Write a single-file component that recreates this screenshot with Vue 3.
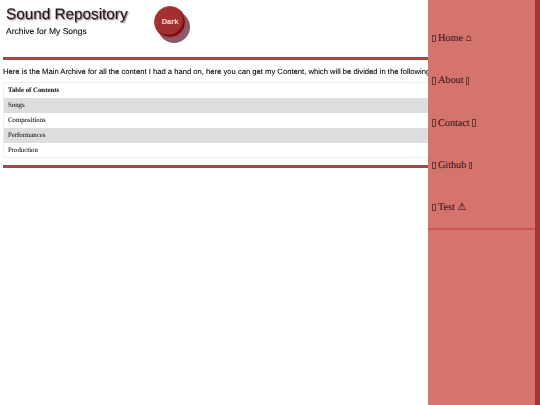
<script setup>
const contents = ['Songs', 'Compositions', 'Performances', 'Production']
const links = [
  { label: 'Home', after: '⌂' },
  { label: 'About', after: '' },
  { label: 'Contact', after: '' },
  { label: 'Github', after: '' },
  { label: 'Test', after: '⚠' }
]
</script>

<template>
  <div class="page">
    <main class="main">
      <header class="header">
        <div class="brand">
          <h1 class="title">Sound Repository</h1>
          <p class="subtitle">Archive for My Songs</p>
        </div>
        <button class="dark-btn">Dark</button>
      </header>
      <hr class="rule" />
      <p class="intro">Here is the Main Archive for all the content I had a hand on, here you can get my Content, which will be divided in the following sections</p>
      <table class="toc">
        <thead>
          <tr><th>Table of Contents</th></tr>
        </thead>
        <tbody>
          <tr v-for="item in contents" :key="item"><td>{{ item }}</td></tr>
        </tbody>
      </table>
      <hr class="rule rule-bottom" />
    </main>
    <nav class="side">
      <ul class="menu">
        <li v-for="l in links" :key="l.label" class="menu-item">
          <span class="tofu"></span>
          <span>{{ l.label }}</span>
          <span v-if="l.after">{{ l.after }}</span>
          <span v-else class="tofu"></span>
        </li>
      </ul>
      <div class="side-rule"></div>
    </nav>
  </div>
</template>

<style>
html, body { margin: 0; overflow: hidden; background: #fff; }
</style>

<style scoped>
.page {
  position: relative;
  width: 540px;
  height: 405px;
  overflow: hidden;
  font-family: "Liberation Sans", Arial, sans-serif;
  color: #000;
  filter: blur(0.4px);
  text-rendering: geometricPrecision;
  -webkit-text-stroke: 0.08px currentColor;
}
.main { padding: 0 0 0 3px; width: 537px; }
.header { display: flex; align-items: flex-start; height: 57px; }
.brand { padding: 5px 0 0 3px; width: 148px; }
.title {
  margin: 0;
  font-size: 15.3px;
  line-height: 19px;
  font-weight: 400;
  white-space: nowrap;
  color: #1a1a1a;
  text-shadow: 1px 1px 1.5px #8a5a68;
}
.subtitle { margin: 0; font-size: 8.5px; line-height: 14px; }
.dark-btn {
  margin-top: 6px;
  width: 32px;
  height: 32px;
  padding: 0 0 2px;
  border: 1px solid #b83a3a;
  border-radius: 50%;
  background: #a33030;
  color: #f5d5d5;
  font: 700 7.5px "Liberation Sans", Arial, sans-serif;
  box-shadow: inset -2px -2px 1px #6f1212, 4px 5px 0 #8b5a6b;
}
.rule {
  margin: 0;
  height: 3px;
  width: 100%;
  border: 0;
  background: #a54747;
}
.intro {
  margin: 6px 0 0;
  font-size: 7.65px;
  line-height: 11px;
  white-space: nowrap;
}
.toc {
  margin-top: 5px;
  width: 100%;
  border-collapse: collapse;
  font-family: "Liberation Serif", "Times New Roman", serif;
  font-size: 6.8px;
  color: #222;
  border: 1px solid #eeeeee;
}
.toc th, .toc td {
  height: 15px;
  padding: 1px 0 0 4px;
  text-align: left;
  box-sizing: border-box;
}
.toc th { font-weight: 700; }
.toc tbody tr:nth-child(odd) { background: #dddddd; }
.rule-bottom { margin-top: 7px; }
.side {
  position: absolute;
  top: 0;
  right: 0;
  width: 107px;
  height: 405px;
  background: #d5736d;
  border-right: 5px solid #a83232;
  font-family: "Liberation Serif", "Times New Roman", serif;
  color: #3a1414;
}
.menu { list-style: none; margin: 0; padding: 17px 0 0 4px; }
.menu-item {
  display: flex;
  align-items: center;
  gap: 2.5px;
  height: 42.25px;
  padding-top: 1px;
  box-sizing: border-box;
  font-size: 10.2px;
  white-space: nowrap;
}
.tofu {
  flex: none;
  width: 3.5px;
  height: 7.5px;
  box-sizing: border-box;
  border: 0.5px solid #6a3a3a;
}
.side-rule { height: 2px; background: #c95555; }
</style>
